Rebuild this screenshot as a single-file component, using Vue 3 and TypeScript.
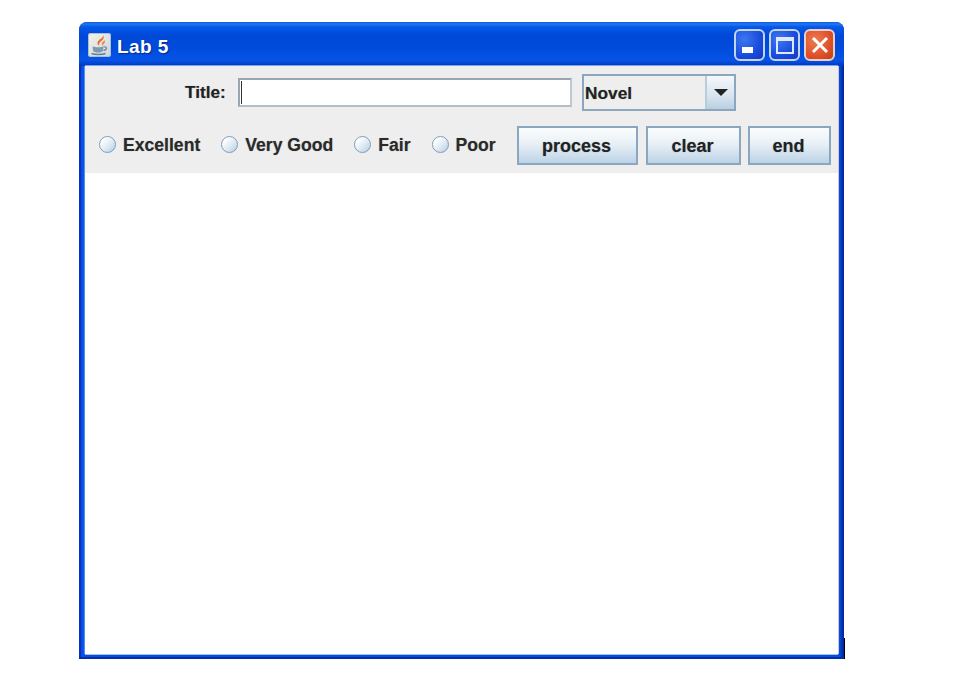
<script setup lang="ts">
const ratings: string[] = ['Excellent', 'Very Good', 'Fair', 'Poor']
const actions: string[] = ['process', 'clear', 'end']
</script>

<template>
  <div class="window">
    <header class="titlebar">
      <span class="app-icon">
        <svg width="23" height="24" viewBox="0 0 23 24">
          <path d="M15 2c1 3-5 4.500-5.500 7.500-.3 1.500.8 2.800 2 3.500-.8-1.500-.6-2.800.7-4C14.500 7 17 5.500 15 2z" fill="#e8702a" />
          <path d="M16.500 7c-.5 1.500-3 2-2.800 4 .1.800.5 1.300 1 1.800 0-1.500 3.500-2.800 1.800-5.800z" fill="#ee8a4a" />
          <path d="M4.500 13.500c3 1 8 1 11 0l-.5 4c-.5 1.500-2.500 2-5 2s-4.700-.5-5-2z" fill="#7f9ab0" />
          <path d="M15.500 14c3.500-1 4.500 2.500 0 3.500" fill="none" stroke="#6f8ca4" stroke-width="1.300" />
          <path d="M3.500 20.500c3 1.300 11 1.300 14 0" fill="none" stroke="#5f7f96" stroke-width="1.500" />
        </svg>
      </span>
      <span class="title">Lab 5</span>
      <div class="controls">
        <span class="ctl blue"><i class="min"></i></span>
        <span class="ctl blue"><i class="max"></i></span>
        <span class="ctl red">
          <svg width="22" height="22" viewBox="0 0 22 22">
            <path d="M4 4l14 14M18 4L4 18" stroke="#fff" stroke-width="3" />
          </svg>
        </span>
      </div>
    </header>

    <div class="body">
      <section class="panel">
        <div class="row-top">
          <label class="title-label">Title:</label>
          <div class="input"><i class="caret"></i></div>
          <div class="select">
            <span class="select-value">Novel</span>
            <span class="select-arrow"><i></i></span>
          </div>
        </div>
        <div class="row-bottom">
          <div class="radios">
            <span v-for="r in ratings" :key="r" class="radio-item">
              <i class="radio"></i><span class="radio-text">{{ r }}</span>
            </span>
          </div>
          <div class="buttons">
            <button v-for="a in actions" :key="a" :class="['btn', a]">{{ a }}</button>
          </div>
        </div>
      </section>
      <main class="canvas"></main>
    </div>
  </div>
</template>

<style>
html, body { margin: 0; background: #fff; }
</style>

<style scoped>
.window {
  position: relative;
  box-sizing: border-box;
  width: 765px;
  height: 637px;
  margin: 22px 0 0 79px;
  display: flex;
  flex-direction: column;
  border-radius: 8px 8px 0 0;
  border-bottom: 2px solid #0230a8;
  background: linear-gradient(90deg, #0434c0 0, #0434c0 1.500px, #0848e0 2px, #0a54ec 4px, #0a4cdc 6px, #0a4cdc calc(100% - 6px), #0848dc calc(100% - 4px), #0232ac calc(100% - 2px), #02289c 100%);
  font-family: "Liberation Sans", Arial, sans-serif;
}
.window::after {
  content: "";
  position: absolute;
  right: -1px;
  bottom: -2px;
  width: 1px;
  height: 21px;
  background: #000;
}
.titlebar {
  height: 44px;
  flex: none;
  display: flex;
  align-items: center;
  padding: 0 9px;
  box-sizing: border-box;
  border-radius: 8px 8px 0 0;
  background: linear-gradient(180deg, #0a58e0 0, #2478f0 2px, #0658e8 5px, #0048d8 14px, #004cdc 28px, #0654e8 38px, #0238b8 44px);
}
.app-icon {
  width: 23px;
  height: 24px;
  flex: none;
  margin-top: 1px;
  border-radius: 3px;
  background: linear-gradient(135deg, #f6f3ea, #cdd6da);
  box-shadow: inset 0 0 0 1px #a8c0d8;
  display: flex;
  align-items: center;
  justify-content: center;
}
.title {
  margin: 6px 0 0 6px;
  color: #fff;
  font-size: 19px;
  font-weight: 700;
  letter-spacing: .4px;
  text-shadow: 1px 1px 1px #0a2a90;
}
.controls {
  margin-left: auto;
  margin-top: 2px;
  display: flex;
  gap: 4px;
}
.ctl {
  width: 31px;
  height: 32px;
  box-sizing: border-box;
  border: 2px solid #c4d4f4;
  border-radius: 6px;
  position: relative;
  display: flex;
  align-items: center;
  justify-content: center;
}
.blue { background: radial-gradient(circle at 30% 30%, #3c78f0, #1a4cdc 60%, #1238c0); }
.red { background: radial-gradient(circle at 35% 35%, #ec7c54, #e05028 60%, #c43c12); border-color: #e8d0c8; }
.min {
  position: absolute;
  left: 6px;
  bottom: 6px;
  width: 11px;
  height: 6px;
  background: #fff;
}
.max {
  width: 18px;
  height: 17px;
  box-sizing: border-box;
  border: 2px solid #dde8fa;
  border-top-width: 4px;
}
.body {
  flex: 1;
  margin: 0 6px 3px;
  display: flex;
  flex-direction: column;
  background: #fff;
  box-shadow: -1px 0 0 #5a8cf0, 1px 0 0 #c4ccdc, 0 1px 0 #a4c4f0, 0 -1px 0 #7aa4f0;
}
.panel {
  height: 107px;
  flex: none;
  background: #eeeeee;
  box-sizing: border-box;
  padding-top: 8px;
}
.row-top {
  height: 37px;
  display: flex;
  align-items: center;
}
.title-label {
  margin-left: 100px;
  width: 41px;
  font-size: 17.200px;
  font-weight: 700;
  color: #222;
  white-space: nowrap;
  text-shadow: 0 0 1px rgba(0, 0, 0, .35);
}
.input {
  margin-left: 12px;
  width: 334px;
  height: 29px;
  box-sizing: border-box;
  background: #fff;
  border: 2px solid #98a6b4;
  border-right-color: #c0c8d0;
  border-bottom-color: #b4bec8;
  display: flex;
  align-items: center;
  padding-left: 1px;
}
.caret {
  width: 1px;
  height: 23px;
  background: #333;
}
.select {
  margin-left: 10px;
  width: 154px;
  height: 37px;
  box-sizing: border-box;
  border: 2px solid #8ba6bf;
  display: flex;
  background: #eee;
}
.select-value {
  flex: 1;
  padding-left: 1px;
  line-height: 35px;
  font-size: 17.300px;
  font-weight: 700;
  color: #222;
  border-right: 2px solid #b8ccdc;
  text-shadow: 0 0 1px rgba(0, 0, 0, .35);
}
.select-arrow {
  width: 27px;
  flex: none;
  background: linear-gradient(180deg, #f4f8fb, #d8e4ee 60%, #b8d0e2);
  display: flex;
  align-items: center;
  justify-content: center;
}
.select-arrow i {
  width: 0;
  height: 0;
  border-left: 7px solid transparent;
  border-right: 7px solid transparent;
  border-top: 7px solid #222;
}
.row-bottom {
  margin-top: 15px;
  height: 39px;
  display: flex;
  align-items: center;
  padding-left: 14px;
}
.radios {
  display: flex;
  align-items: center;
  gap: 21px;
  margin-top: -3px;
}
.radio-item {
  display: flex;
  align-items: center;
  gap: 7px;
  font-size: 17.600px;
  font-weight: 700;
  color: #2a2a2a;
  white-space: nowrap;
}
.radio-text {
  position: relative;
  top: 1px;
  text-shadow: 0 0 1px rgba(0, 0, 0, .35);
}
.radio {
  width: 17px;
  height: 17px;
  box-sizing: border-box;
  border-radius: 50%;
  border: 1.500px solid #7f9db9;
  background: linear-gradient(135deg, #fdfefe 20%, #dce8f2 60%, #b4cce0);
}
.buttons {
  margin-left: auto;
  margin-right: 7px;
  display: flex;
  gap: 8px;
}
.btn {
  height: 39px;
  box-sizing: border-box;
  border: 2px solid #8ba6bf;
  padding: 2px 2px 0 0;
  font-family: inherit;
  font-size: 18px;
  font-weight: 700;
  color: #222;
  background: linear-gradient(180deg, #fbfdfe, #e8f0f6 45%, #bcd3e6);
  text-shadow: 0 0 1px rgba(0, 0, 0, .35);
}
.btn.process { width: 121px; }
.btn.clear { width: 95px; margin-right: -1px; }
.btn.end { width: 83px; }
.canvas {
  flex: 1;
  background: #fff;
}
</style>
